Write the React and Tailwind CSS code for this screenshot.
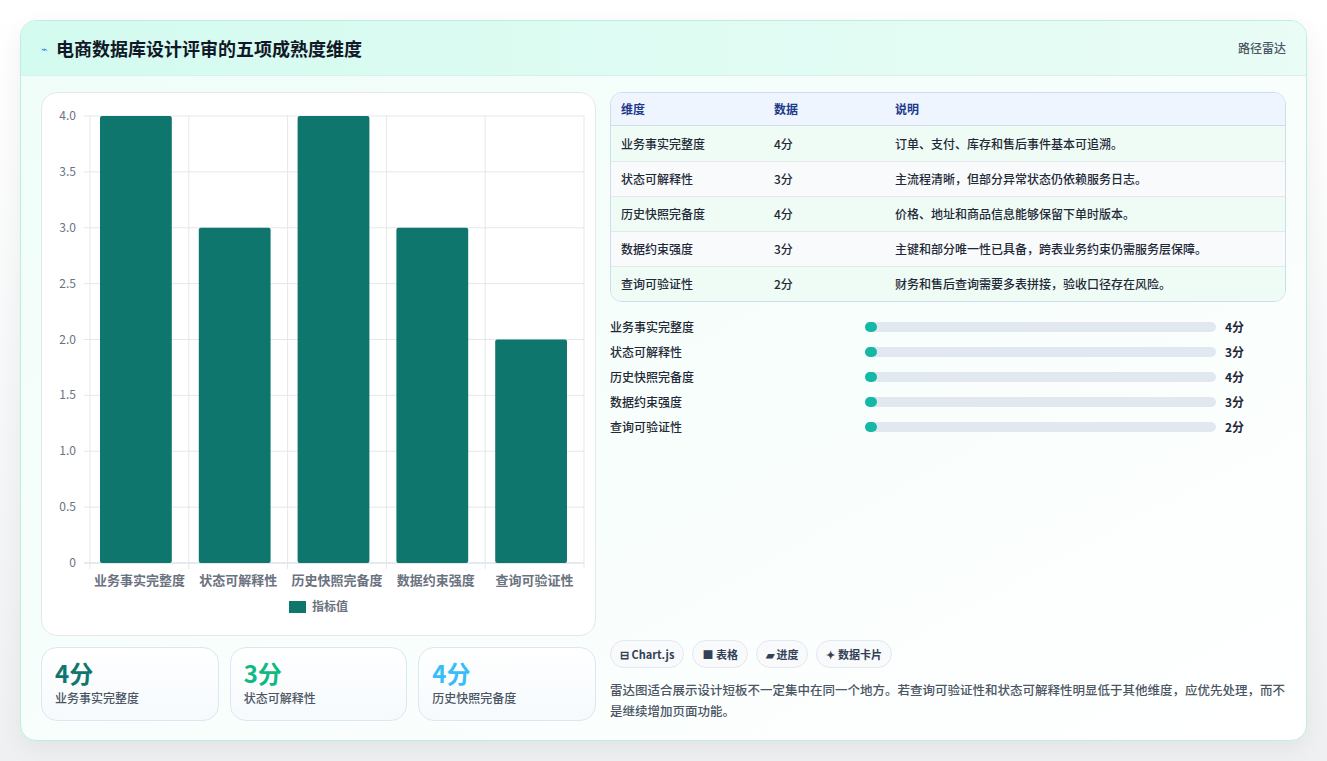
const F = { fontFamily: '"Noto Sans CJK SC","Noto Sans",sans-serif' };
const dims = [
  ["业务事实完整度", 4, "订单、支付、库存和售后事件基本可追溯。"],
  ["状态可解释性", 3, "主流程清晰，但部分异常状态仍依赖服务日志。"],
  ["历史快照完备度", 4, "价格、地址和商品信息能够保留下单时版本。"],
  ["数据约束强度", 3, "主键和部分唯一性已具备，跨表业务约束仍需服务层保障。"],
  ["查询可验证性", 2, "财务和售后查询需要多表拼接，验收口径存在风险。"],
];
function Chart() {
  const W = 555, H = 544, x0 = 48, x1 = 542, y0 = 23, y1 = 470;
  const ticks = [0, 0.5, 1, 1.5, 2, 2.5, 3, 3.5, 4];
  const cw = (x1 - x0) / 5;
  return (
    <svg width={W} height={H} className="block">
      {ticks.map((t) => {
        const y = y1 - (t / 4) * (y1 - y0);
        return (
          <g key={t}>
            <line x1={x0 - 6} x2={x1} y1={y} y2={y} stroke={t === 0 ? "#cbd5e1" : "#e5e7eb"} />
            <text x={x0 - 14} y={y + 4} textAnchor="end" fontSize="12" fill="#6b7280" style={F}>{t === 0 ? "0" : t.toFixed(1)}</text>
          </g>
        );
      })}
      {[0, 1, 2, 3, 4, 5].map((i) => (
        <line key={i} x1={x0 + i * cw} x2={x0 + i * cw} y1={y0} y2={y1 + 6} stroke="#e5e7eb" />
      ))}
      {dims.map(([n, v], i) => {
        const h = (v / 4) * (y1 - y0);
        return (
          <g key={n}>
            <rect x={x0 + i * cw + 10} y={y1 - h} width={cw - 27} height={h} rx="2" fill="#0f766e" />
            <text x={x0 + i * cw + cw / 2} y={y1 + 22} textAnchor="middle" fontSize="13" fill="#6b7280" fontWeight="600" style={F}>{n}</text>
          </g>
        );
      })}
      <rect x="247" y="508" width="17" height="12" fill="#0f766e" />
      <text x="270" y="518" fontSize="12" fill="#6b7280" fontWeight="600" style={F}>指标值</text>
    </svg>
  );
}
export default function App() {
  return (
    <div className="w-[1327px] h-[761px] bg-[#f3f4f6] p-5 pb-0 bg-gradient-to-b from-white to-[#eef0f2]" style={F}>
      <div className="h-[721px] rounded-2xl border border-[#bfeee0] bg-gradient-to-br from-[#effdf8] to-white shadow-[0_8px_24px_rgba(0,0,0,0.06)] overflow-hidden flex flex-col">
        <div className="h-[55px] shrink-0 flex items-center justify-between px-5 bg-gradient-to-r from-[#d3fbef] to-[#e9fcf6] border-b border-[#d5f3ea]">
          <div className="flex items-center gap-2">
            <span className="text-[#3b82f6] text-[11px]">⌁</span>
            <span className="text-[18px] font-bold text-[#111827]">电商数据库设计评审的五项成熟度维度</span>
          </div>
          <span className="text-xs text-[#4b5563] font-medium">路径雷达</span>
        </div>
        <div className="flex-1 flex gap-[14px] px-5 pt-4 pb-5">
          <div className="w-[555px] flex flex-col gap-[11px]">
            <div className="h-[544px] rounded-2xl border border-[#e2e8f0] bg-white overflow-hidden"><Chart /></div>
            <div className="grid grid-cols-3 gap-[11px]">
              {[["4分", "text-[#0f766e]", dims[0][0]], ["3分", "text-[#10b981]", dims[1][0]], ["4分", "text-[#38bdf8]", dims[2][0]]].map(([v, c, l], i) => (
                <div key={i} className="h-[74px] rounded-2xl border border-[#dbe7f3] bg-gradient-to-b from-white to-[#f6fafd] px-[13px] pt-[10px]">
                  <div className={`text-[24px] font-bold leading-[30px] ${c}`}>{v}</div>
                  <div className="text-xs text-[#4b5563] font-medium mt-[2px]">{l}</div>
                </div>
              ))}
            </div>
          </div>
          <div className="flex-1 flex flex-col">
            <div className="rounded-xl border border-[#cfdcec] overflow-hidden text-xs text-[#1f2937] font-medium">
              <div className="flex h-[33px] items-center bg-[#eef5ff] border-b border-[#cfdcec] text-[#1e3a8a] font-bold">
                <div className="w-[163px] pl-[10px]">维度</div>
                <div className="w-[121px]">数据</div>
                <div>说明</div>
              </div>
              {dims.map(([n, v, d], i) => (
                <div key={n} className={`flex h-[35px] items-center ${i ? "border-t border-[#e5e7eb]" : ""} ${i % 2 ? "bg-[#f8fafc]" : "bg-[#effcf5]"}`}>
                  <div className="w-[163px] pl-[10px]">{n}</div>
                  <div className="w-[121px]">{v}分</div>
                  <div>{d}</div>
                </div>
              ))}
            </div>
            <div className="mt-[12px] flex flex-col">
              {dims.map(([n, v]) => (
                <div key={n} className="h-[25px] flex items-center text-xs font-medium text-[#1f2937]">
                  <div className="w-[255px]">{n}</div>
                  <div className="w-[351px] h-[10px] rounded-full bg-[#e2e8f0]"><div className="w-3 h-[10px] rounded-full bg-[#14b8a6]" /></div>
                  <div className="ml-[9px] font-bold">{v}分</div>
                </div>
              ))}
            </div>
            <div className="flex-1" />
            <div className="flex gap-[8px]">
              {["⊟ Chart.js", "■ 表格", "▰ 进度", "✦ 数据卡片"].map((t) => (
                <span key={t} className="h-[28px] px-[9px] flex items-center rounded-full border border-[#e2e8f0] bg-[#f8fafc] text-[11px] font-semibold text-[#334155]">{t}</span>
              ))}
            </div>
            <p className="mt-[11px] text-[12.5px] leading-[21px] text-[#4b5563] font-medium">雷达图适合展示设计短板不一定集中在同一个地方。若查询可验证性和状态可解释性明显低于其他维度，应优先处理，而不是继续增加页面功能。</p>
          </div>
        </div>
      </div>
    </div>
  );
}
